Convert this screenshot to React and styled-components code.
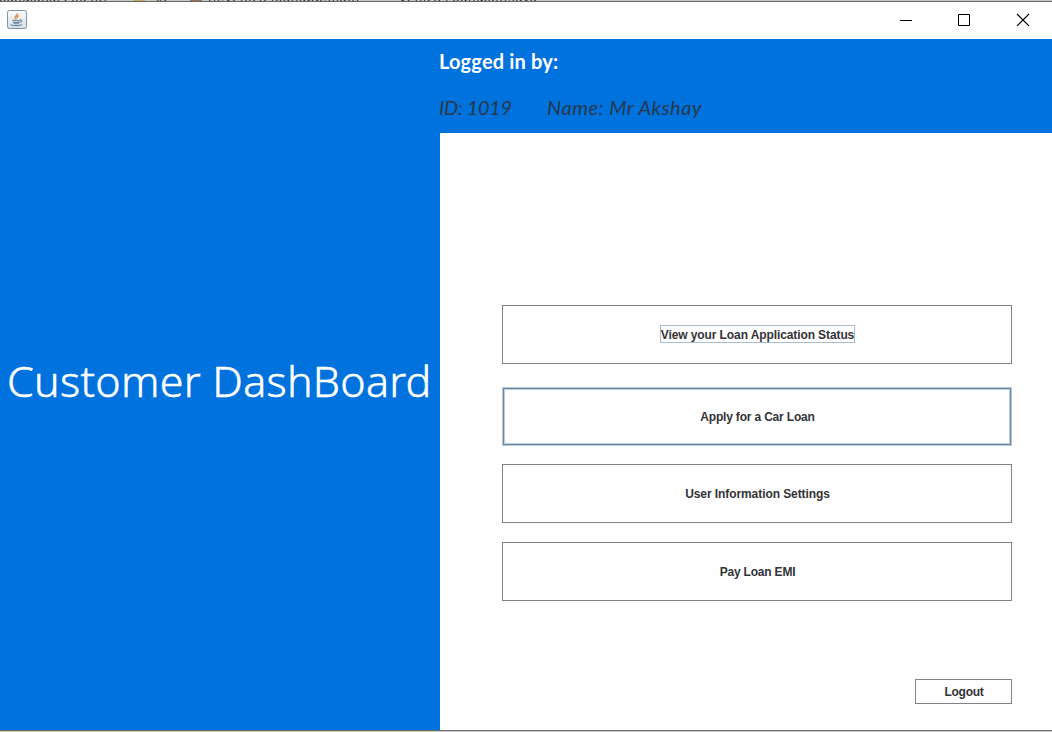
import React from "react";
import styled, { createGlobalStyle, css } from "styled-components";

const GlobalStyle = createGlobalStyle`
  * { box-sizing: border-box; }
  html, body { margin: 0; padding: 0; overflow: hidden; background: #fefefe; }
`;

const Screen = styled.div`
  width: 1052px;
  height: 732px;
  display: flex;
  flex-direction: column;
  overflow: hidden;
  background: #fefefe;
`;

const BackgroundStrip = styled.div`
  flex: none;
  height: 2px;
  display: flex;
  align-items: flex-end;
  overflow: hidden;
  background: #c9c9c7;
  border-bottom: 1px solid #686868;
`;

const Crumb = styled.span`
  flex: none;
  width: ${(p) => p.$w}px;
  height: 16px;
  margin-left: ${(p) => p.$ml}px;
  margin-bottom: -5px;
  font: 12px/16px "Open Sans", sans-serif;
  letter-spacing: ${(p) => p.$ls || 0}px;
  white-space: nowrap;
  color: #111;
`;

const Swatch = styled.span`
  flex: none;
  width: 12px;
  height: 1px;
  margin-left: ${(p) => p.$ml}px;
  background: ${(p) => p.$color};
`;

const TitleBar = styled.header`
  flex: none;
  height: 37px;
  display: flex;
  align-items: flex-start;
  justify-content: space-between;
  padding: 8px 22px 0 7px;
  background: #fefefe;
`;

const WindowControls = styled.div`
  display: flex;
  gap: 45px;
  padding-top: 2px;
`;

const Body = styled.main`
  flex: none;
  height: 691px;
  display: grid;
  grid-template-columns: 440px 1fr;
  background: #0072dd;
`;

const Sidebar = styled.aside`
  display: flex;
  align-items: center;
  padding: 0 0 8px 7px;
`;

const Title = styled.h1`
  margin: 0;
  font: 300 43px/60px "Noto Sans", "Open Sans", sans-serif;
  letter-spacing: 0.27px;
  -webkit-text-stroke: 0.5px #fff;
  white-space: nowrap;
  color: #fff;
`;

const Content = styled.section`
  display: flex;
  flex-direction: column;
`;

const UserHeader = styled.div`
  flex: none;
  height: 94px;
  margin-left: -1px;
  font-family: Lato, sans-serif;
  font-size: 20px;
  line-height: 24px;
  white-space: pre;
`;

const LoggedIn = styled.div`
  padding-top: 10px;
  font-weight: 700;
  letter-spacing: 0.17px;
  color: #fff;
`;

const UserLine = styled.div`
  display: flex;
  padding-top: 22px;
  font-style: italic;
  color: #26384a;
`;

const UserField = styled.span`
  width: ${(p) => p.$w}px;
  letter-spacing: ${(p) => p.$ls}px;
`;

const Actions = styled.div`
  flex: 1;
  display: flex;
  flex-direction: column;
  align-items: flex-end;
  padding: 172px 40px 0 62px;
  background: #fefefe;
`;

const SwingButton = styled.button`
  flex: none;
  width: ${(p) => p.$w || 510}px;
  height: ${(p) => p.$h || 59}px;
  margin: 0 0 ${(p) => p.$mb || 0}px;
  padding: 0 0 0 1px;
  display: flex;
  align-items: center;
  justify-content: center;
  border: 1px solid #808086;
  background: #fefefe;
  color: #333338;
  font: bold 12px/16px "Liberation Sans", Arial, sans-serif;
  letter-spacing: ${(p) => p.$ls || 0}px;
  ${(p) =>
    p.$hover &&
    css`
      border-color: #b3cadd;
      box-shadow: inset 0 0 0 1px #73879b, inset 0 0 0 2px #b9cede;
    `}
`;

const FocusLabel = styled.span`
  height: 16px;
  margin-bottom: 2px;
  line-height: 18px;
  box-shadow: 0 0 0 1px #a9bdd1;
`;

const BottomStrip = styled(BackgroundStrip)`
  border-top: 1px solid #6c6c6c;
  border-bottom: 0;
`;

const JavaIcon = () => (
  <svg width="20" height="21" viewBox="0 0 20 21">
    <defs>
      <linearGradient id="tile" x1="0" y1="0" x2="0" y2="1">
        <stop offset="0" stopColor="#fbfcfd" />
        <stop offset="1" stopColor="#d3dee8" />
      </linearGradient>
    </defs>
    <rect x="0.5" y="0.5" width="19" height="18" rx="1.8" fill="url(#tile)" stroke="#8494a6" />
    <path d="M10.4 3.2c.6 2.1-3.6 3-2.2 5.2.4.7.8.9.7 1.5M11.6 5.6c-1.7.8-2.1 1.5-1.1 2.8" fill="none" stroke="#ec9245" strokeWidth="1.5" />
    <path d="M5.2 10c1.8.9 6 .9 8.1 0M5.9 11.7c1.7.8 4.9.8 6.5 0M6.6 13.2c1.5.6 3.9.6 5.2 0M13.2 9.9c2.3-.3 1.9 2-.6 2.5M3.9 14.2c-.1 1.8 9.2 2 11.3.2" fill="none" stroke="#6f8aa4" strokeWidth="1.1" />
  </svg>
);

const Minimize = () => (
  <svg width="14" height="14"><path d="M2 8.5h12" stroke="#000" /></svg>
);
const Maximize = () => (
  <svg width="14" height="14"><path d="M1.5 2.5h11v11h-11z" fill="none" stroke="#000" /></svg>
);
const Close = () => (
  <svg width="14" height="14"><path d="M1 2l12 12M13 2L1 14" fill="none" stroke="#000" strokeWidth="1.1" /></svg>
);

export default function App() {
  return (
    <Screen>
      <GlobalStyle />
      <BackgroundStrip>
        <Crumb $w={119} $ml={-1} $ls={0.7}>oanManagementE</Crumb>
        <Swatch $ml={15} $color="#c9a75c" />
        <Crumb $w={22} $ml={8}>src</Crumb>
        <Swatch $ml={15} $color="#9c6e55" />
        <Crumb $w={158} $ml={6} $ls={1}>fil.vehicleloanapp.main</Crumb>
        <Crumb $w={150} $ml={33} $ls={0.9}>VehicleLoanMain.java</Crumb>
      </BackgroundStrip>
      <TitleBar>
        <JavaIcon />
        <WindowControls>
          <Minimize />
          <Maximize />
          <Close />
        </WindowControls>
      </TitleBar>
      <Body>
        <Sidebar>
          <Title>Customer DashBoard</Title>
        </Sidebar>
        <Content>
          <UserHeader>
            <LoggedIn>Logged in by:</LoggedIn>
            <UserLine>
              <UserField $w={108} $ls={-0.35}>ID: 1019</UserField>
              <UserField $w={170} $ls={0.52}>Name: Mr Akshay</UserField>
            </UserLine>
          </UserHeader>
          <Actions>
            <SwingButton $mb={23} $ls={-0.1}>
              <FocusLabel>View your Loan Application Status</FocusLabel>
            </SwingButton>
            <SwingButton $hover $mb={18} $ls={-0.18}>Apply for a Car Loan</SwingButton>
            <SwingButton $mb={19} $ls={-0.08}>User Information Settings</SwingButton>
            <SwingButton $mb={78} $ls={-0.2}>Pay Loan EMI</SwingButton>
            <SwingButton $w={97} $h={25} $ls={-0.25}>Logout</SwingButton>
          </Actions>
        </Content>
      </Body>
      <BottomStrip />
    </Screen>
  );
}
